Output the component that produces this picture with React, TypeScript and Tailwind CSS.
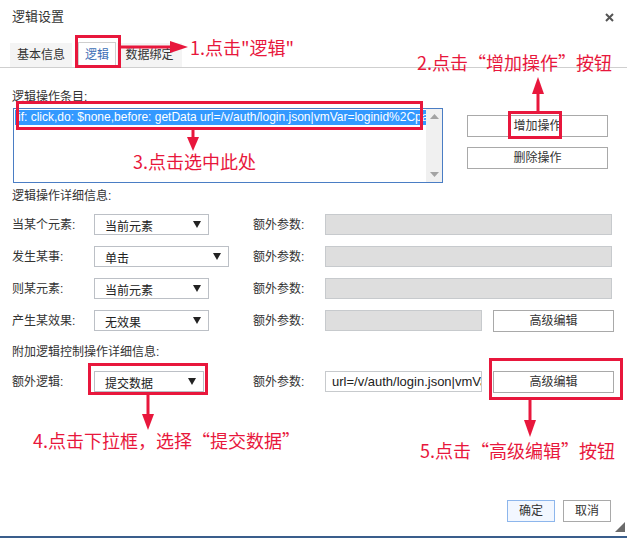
import React from "react";

const UI = "font-['Liberation_Sans','Noto_Sans_CJK_SC',sans-serif]";

function Caret() {
  return (
    <svg width="8" height="7" viewBox="0 0 8 7" className="shrink-0">
      <path d="M0 0 H8 L4 7 Z" fill="#222" />
    </svg>
  );
}

function Select({ text, className }: { text: string; className: string }) {
  return (
    <div
      className={`flex items-center justify-between h-[21px] border border-[#bcc0c6] bg-white pl-[10px] pr-[7px] ${className}`}
    >
      <span className="pt-[4px] text-[12px] leading-[14px] text-[#222]">{text}</span>
      <Caret />
    </div>
  );
}

function Btn({ text, className }: { text: string; className: string }) {
  return (
    <div
      className={`flex items-center justify-center h-[22px] border border-[#a9a9a9] bg-white text-[12px] text-[#333] ${className}`}
    >
      {text}
    </div>
  );
}

function GrayInput({ className }: { className: string }) {
  return <div className={`h-[21px] bg-[#dedede] border border-[#c7cacd] ${className}`} />;
}

function Row({
  label,
  select,
  selectClass,
  children,
}: {
  label: string;
  select: string;
  selectClass: string;
  children: React.ReactNode;
}) {
  return (
    <div className="flex items-center h-[21px]">
      <div className="w-[82px] text-[12px] text-[#333]">{label}</div>
      <div className="w-[159px]">
        <Select text={select} className={selectClass} />
      </div>
      <div className="w-[72px] text-[12px] text-[#333]">额外参数:</div>
      {children}
    </div>
  );
}

function Overlay() {
  const R = "#e8173c";
  return (
    <svg className="absolute inset-0 pointer-events-none" width="627" height="538" viewBox="0 0 627 538">
      <rect x="76.5" y="36.5" width="43" height="30" fill="none" stroke={R} strokeWidth="3" />
      <rect x="17.5" y="102.5" width="404" height="26" fill="none" stroke={R} strokeWidth="3" />
      <rect x="509.5" y="112.5" width="51" height="25" fill="none" stroke={R} strokeWidth="3" />
      <rect x="89.5" y="364.5" width="117" height="29" fill="none" stroke={R} strokeWidth="3" />
      <rect x="490.5" y="359.5" width="131" height="39" fill="none" stroke={R} strokeWidth="3" />
      <line x1="120" y1="47" x2="174" y2="47" stroke={R} strokeWidth="3" />
      <polygon points="170,41 188,47 170,53" fill={R} />
      <line x1="538" y1="111" x2="538" y2="90" stroke={R} strokeWidth="3" />
      <polygon points="532,94 538,77 544,94" fill={R} />
      <line x1="193" y1="130" x2="193" y2="142" stroke={R} strokeWidth="3" />
      <polygon points="187,137 193,151 199,137" fill={R} />
      <line x1="148" y1="394" x2="148" y2="418" stroke={R} strokeWidth="3" />
      <polygon points="142,414 148,430 154,414" fill={R} />
      <line x1="530" y1="399" x2="530" y2="424" stroke={R} strokeWidth="3" />
      <polygon points="524,420 530,437 536,420" fill={R} />
    </svg>
  );
}

const NOTE =
  "absolute whitespace-nowrap text-[18px] leading-[18px] text-[#e8173c] font-['Noto_Sans_CJK_SC',sans-serif]";

export default function App() {
  return (
    <div
      className={`relative w-[627px] h-[538px] bg-white overflow-hidden box-border border-b-[2px] border-[#3a5e8c] ${UI} text-[12px] text-[#333]`}
    >
      <div className="h-[34px] flex items-center justify-between pl-[12px] pr-[13px]">
        <span className="text-[13px] text-[#333]">逻辑设置</span>
        <svg width="9" height="9" viewBox="0 0 9 9">
          <path d="M1 1 L8 8 M8 1 L1 8" stroke="#555" strokeWidth="2" />
        </svg>
      </div>

      <div className="h-[34px] box-border border-b border-[#cfcfcf] flex items-end pl-[10px]">
        <div className="h-[24px] w-[62px] flex items-center justify-center bg-[#f4f4f4] text-[12px] text-[#333]">
          基本信息
        </div>
        <div className="ml-[6px] h-[25px] w-[38px] flex items-center justify-center bg-white border border-b-0 border-[#cfcfcf] text-[12px] text-[#3d6fb6]">
          逻辑
        </div>
        <div className="ml-[1px] h-[24px] w-[65px] flex items-center justify-center bg-[#f4f4f4] text-[12px] text-[#333]">
          数据绑定
        </div>
      </div>

      <div className="pl-[12px]">
        <div className="mt-[21px] h-[16px] leading-[16px]">逻辑操作条目:</div>
        <div className="mt-[3px] flex">
          <div className="ml-[1px] w-[430px] h-[75px] border border-[#4a7dc4] flex box-border">
            <div className="flex-1 min-w-0 pt-[1px] pl-[1px]">
              <div className="h-[15px] bg-[#3399ff] text-white text-[12px] leading-[15px] whitespace-nowrap overflow-hidden pl-[3px] font-['Liberation_Sans',sans-serif]">
                if: click,do: $none,before: getData url=/v/auth/login.json|vmVar=loginid%2Cpa
              </div>
            </div>
            <div className="w-[16px] bg-[#f0f0f0] flex flex-col items-center justify-between py-[5px]">
              <svg width="9" height="5" viewBox="0 0 9 5">
                <path d="M0 5 L4.5 0 L9 5 Z" fill="#a3a3a3" />
              </svg>
              <svg width="9" height="5" viewBox="0 0 9 5">
                <path d="M0 0 L9 0 L4.5 5 Z" fill="#a3a3a3" />
              </svg>
            </div>
          </div>
          <div className="ml-[24px] pt-[7px] flex flex-col gap-[10px]">
            <Btn text="增加操作" className="w-[141px]" />
            <Btn text="删除操作" className="w-[141px]" />
          </div>
        </div>

        <div className="mt-[5px] h-[16px] leading-[16px]">逻辑操作详细信息:</div>
        <div className="mt-[10px] flex flex-col gap-[11px]">
          <Row label="当某个元素:" select="当前元素" selectClass="w-[115px]">
            <GrayInput className="w-[287px]" />
          </Row>
          <Row label="发生某事:" select="单击" selectClass="w-[135px]">
            <GrayInput className="w-[287px]" />
          </Row>
          <Row label="则某元素:" select="当前元素" selectClass="w-[115px]">
            <GrayInput className="w-[287px]" />
          </Row>
          <Row label="产生某效果:" select="无效果" selectClass="w-[115px]">
            <GrayInput className="w-[157px]" />
            <Btn text="高级编辑" className="ml-[11px] w-[121px] h-[21px]" />
          </Row>
        </div>

        <div className="mt-[13px] h-[16px] leading-[16px]">附加逻辑控制操作详细信息:</div>
        <div className="mt-[11px]">
          <Row label="额外逻辑:" select="提交数据" selectClass="w-[110px]">
            <div className="w-[157px] h-[21px] border border-[#c7cacd] bg-white overflow-hidden whitespace-nowrap pl-[6px] text-[13px] leading-[19px] text-[#222] font-['Liberation_Sans',sans-serif]">
              url=/v/auth/login.json|vmVar
            </div>
            <Btn text="高级编辑" className="ml-[11px] w-[121px] h-[21px]" />
          </Row>
        </div>

        <div className="mt-[108px] flex justify-end pr-[16px] gap-[8px]">
          <div className="w-[48px] h-[22px] flex items-center justify-center border border-[#8db6ec] bg-[#f2f7ff] text-[12px] text-[#333]">
            确定
          </div>
          <div className="w-[48px] h-[22px] flex items-center justify-center border border-[#a9a9a9] bg-white text-[12px] text-[#333]">
            取消
          </div>
        </div>
      </div>

      <svg className="absolute right-[2px] bottom-[4px]" width="10" height="10" viewBox="0 0 10 10">
        <path d="M10 0 L10 10 L0 10 Z" fill="#6b6b6b" />
      </svg>

      <Overlay />
      <div className={`${NOTE} left-[190px] top-[38px]`}>1.点击"逻辑"</div>
      <div className={`${NOTE} left-[417px] top-[53px]`}>2.点击“增加操作”按钮</div>
      <div className={`${NOTE} left-[133px] top-[152px]`}>3.点击选中此处</div>
      <div className={`${NOTE} left-[33px] top-[431px]`}>4.点击下拉框，选择“提交数据”</div>
      <div className={`${NOTE} left-[420px] top-[441px]`}>5.点击“高级编辑”按钮</div>
    </div>
  );
}
